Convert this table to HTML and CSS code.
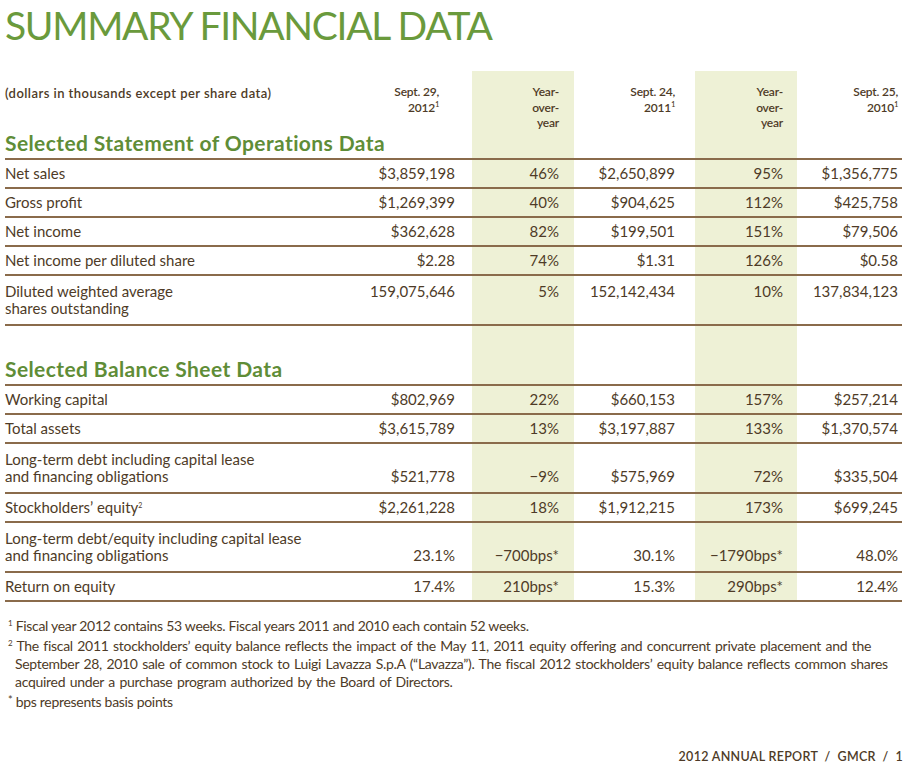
FILE: index.html
```html
<!DOCTYPE html>
<html lang="en">
<head>
<meta charset="utf-8">
<title>Summary Financial Data</title>
<link rel="stylesheet" href="styles.css">
</head>
<body>
<div class="page">
  <h1 class="title">SUMMARY FINANCIAL DATA</h1>
  <table class="fin">
    <colgroup>
      <col class="c-label"><col class="c-1"><col class="c-2"><col class="c-3"><col class="c-4"><col class="c-5">
    </colgroup>
    <thead>
      <tr class="hdr">
        <th class="lbl">(dollars in thousands except per share data)</th>
        <th class="v1 h1">Sept. 29,<br>2012<sup>1</sup></th>
        <th class="v2 yoy">Year-<br>over-<br>year</th>
        <th class="v3">Sept. 24,<br>2011<sup>1</sup></th>
        <th class="v4 yoy">Year-<br>over-<br>year</th>
        <th class="v5">Sept. 25,<br>2010<sup>1</sup></th>
      </tr>
    </thead>
    <tbody>
      <tr class="sec sec1">
        <td colspan="2" class="sec-title">Selected Statement of Operations Data</td>
        <td class="yoy"></td><td></td><td class="yoy"></td><td></td>
      </tr>
      <tr class="row">
        <td class="lbl">Net sales</td><td class="v1">$3,859,198</td><td class="v2 yoy">46%</td><td class="v3">$2,650,899</td><td class="v4 yoy">95%</td><td class="v5">$1,356,775</td>
      </tr>
      <tr class="row">
        <td class="lbl">Gross profit</td><td class="v1">$1,269,399</td><td class="v2 yoy">40%</td><td class="v3">$904,625</td><td class="v4 yoy">112%</td><td class="v5">$425,758</td>
      </tr>
      <tr class="row">
        <td class="lbl">Net income</td><td class="v1">$362,628</td><td class="v2 yoy">82%</td><td class="v3">$199,501</td><td class="v4 yoy">151%</td><td class="v5">$79,506</td>
      </tr>
      <tr class="row">
        <td class="lbl">Net income per diluted share</td><td class="v1">$2.28</td><td class="v2 yoy">74%</td><td class="v3">$1.31</td><td class="v4 yoy">126%</td><td class="v5">$0.58</td>
      </tr>
      <tr class="row two top">
        <td class="lbl">Diluted weighted average<br>shares outstanding</td><td class="v1">159,075,646</td><td class="v2 yoy">5%</td><td class="v3">152,142,434</td><td class="v4 yoy">10%</td><td class="v5">137,834,123</td>
      </tr>
      <tr class="spacer">
        <td colspan="2"></td><td class="yoy"></td><td></td><td class="yoy"></td><td></td>
      </tr>
      <tr class="sec sec2">
        <td colspan="2" class="sec-title">Selected Balance Sheet Data</td>
        <td class="yoy"></td><td></td><td class="yoy"></td><td></td>
      </tr>
      <tr class="row">
        <td class="lbl">Working capital</td><td class="v1">$802,969</td><td class="v2 yoy">22%</td><td class="v3">$660,153</td><td class="v4 yoy">157%</td><td class="v5">$257,214</td>
      </tr>
      <tr class="row">
        <td class="lbl">Total assets</td><td class="v1">$3,615,789</td><td class="v2 yoy">13%</td><td class="v3">$3,197,887</td><td class="v4 yoy">133%</td><td class="v5">$1,370,574</td>
      </tr>
      <tr class="row two bottom">
        <td class="lbl">Long-term debt including capital lease<br>and financing obligations</td><td class="v1">$521,778</td><td class="v2 yoy">&minus;9%</td><td class="v3">$575,969</td><td class="v4 yoy">72%</td><td class="v5">$335,504</td>
      </tr>
      <tr class="row">
        <td class="lbl">Stockholders&rsquo; equity<sup>2</sup></td><td class="v1">$2,261,228</td><td class="v2 yoy">18%</td><td class="v3">$1,912,215</td><td class="v4 yoy">173%</td><td class="v5">$699,245</td>
      </tr>
      <tr class="row two bottom">
        <td class="lbl">Long-term debt/equity including capital lease<br>and financing obligations</td><td class="v1">23.1%</td><td class="v2 yoy">&minus;700bps*</td><td class="v3">30.1%</td><td class="v4 yoy">&minus;1790bps*</td><td class="v5">48.0%</td>
      </tr>
      <tr class="row">
        <td class="lbl">Return on equity</td><td class="v1">17.4%</td><td class="v2 yoy">210bps*</td><td class="v3">15.3%</td><td class="v4 yoy">290bps*</td><td class="v5">12.4%</td>
      </tr>
    </tbody>
  </table>

  <div class="notes">
    <p><sup>1</sup> Fiscal year 2012 contains 53 weeks. Fiscal years 2011 and 2010 each contain 52 weeks.</p>
    <p class="wide"><sup>2</sup> The fiscal 2011 stockholders&rsquo; equity balance reflects the impact of the May 11, 2011 equity offering and concurrent private placement and the<br>September 28, 2010 sale of common stock to Luigi Lavazza S.p.A (&ldquo;Lavazza&rdquo;). The fiscal 2012 stockholders&rsquo; equity balance reflects common shares<br>acquired under a purchase program authorized by the Board of Directors.</p>
    <p><span class="ast">*</span> bps represents basis points</p>
  </div>

  <div class="footer">2012 ANNUAL REPORT &nbsp;/&nbsp; GMCR &nbsp;/&nbsp; 1</div>
</div>
</body>
</html>
```

FILE: styles.css
```css
html, body {
  margin: 0;
  padding: 0;
  background: #ffffff;
}

body {
  font-family: Lato, "Open Sans", "DejaVu Sans", sans-serif;
  color: #4e3b27;
  width: 916px;
  height: 768px;
  overflow: hidden;
}

.page {
  padding: 0 14px 0 5px;
  position: relative;
  height: 768px;
  box-sizing: border-box;
}

.title {
  margin: 0;
  padding-top: 3px;
  height: 68px;
  font-size: 39px;
  font-weight: 400;
  color: #6a9a3c;
  letter-spacing: -1.3px;
  line-height: 44px;
}

.fin {
  width: 897px;
  border-collapse: collapse;
  table-layout: fixed;
  font-size: 15px;
  line-height: 17px;
}

.c-label { width: 355px; }
.c-1 { width: 112px; }
.c-2 { width: 102px; }
.c-3 { width: 121px; }
.c-4 { width: 102px; }
.c-5 { width: 105px; }

.fin th, .fin td {
  padding: 0;
  text-align: right;
  vertical-align: middle;
}

.fin .lbl { text-align: left; }

.yoy { background: #eef1d6; }

.v1 { padding-right: 17px !important; }
.v2 { padding-right: 15px !important; }
.v3 { padding-right: 20px !important; }
.v4 { padding-right: 14px !important; }
.v5 { padding-right: 4px !important; }

.hdr th {
  font-size: 12px;
  line-height: 15.5px;
  font-weight: 600;
  letter-spacing: -0.2px;
  vertical-align: top;
  padding-top: 13px;
  padding-bottom: 0.5px;
}

.hdr th.h1 { padding-right: 33px !important; }

.hdr th.lbl {
  padding-top: 15px;
  font-size: 13px;
  letter-spacing: 0.45px;
}

sup {
  font-size: 7px;
  line-height: 0;
  vertical-align: 5px;
}

.sec td {
  vertical-align: bottom;
  border-bottom: 2px solid #8a6b4b;
}

.sec-title {
  text-align: left !important;
  font-size: 21px;
  font-weight: 700;
  color: #5f8d37;
  line-height: 22px;
  letter-spacing: 0.4px;
  white-space: nowrap;
}

.sec1 td { padding-top: 1px; padding-bottom: 4px; }
.sec2 td { padding-top: 2px; padding-bottom: 4px; }

.row td {
  border-bottom: 2px solid #8a6b4b;
  padding-top: 5px;
  padding-bottom: 5px;
}

.row.two td {
  padding-top: 7px;
  padding-bottom: 7px;
}

.row.top td { vertical-align: top; }
.row.bottom td { vertical-align: bottom; }

.spacer td { height: 30px; }

.notes {
  margin-top: 15px;
  font-size: 14px;
  line-height: 18px;
  letter-spacing: -0.3px;
}

.notes p {
  margin: 0 0 2px 0;
  padding-left: 10px;
  text-indent: -7px;
  white-space: nowrap;
}

.notes p.wide { word-spacing: 1.2px; }

.notes sup {
  font-size: 8px;
  vertical-align: 5px;
}

.notes .ast {
  font-size: 11px;
  line-height: 0;
  vertical-align: 3px;
}

.footer {
  position: absolute;
  right: 13px;
  top: 749px;
  font-size: 12.5px;
  line-height: 16px;
  font-weight: 600;
  letter-spacing: 0.3px;
}
```
